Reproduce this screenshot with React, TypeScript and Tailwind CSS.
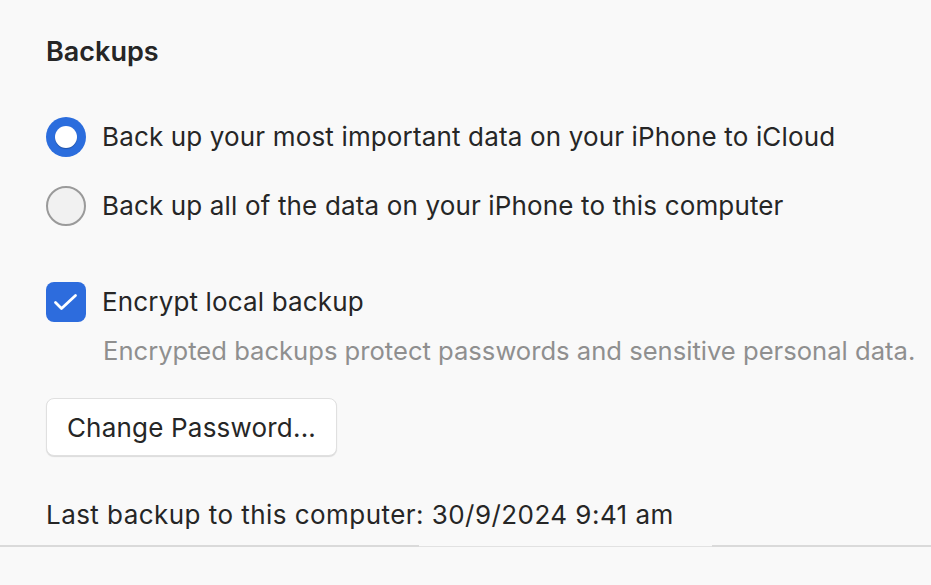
import React from "react";

function RadioOn() {
  return (
    <span className="flex h-[40px] w-[40px] shrink-0 items-center justify-center rounded-full bg-[#2b6ddd]">
      <span className="h-[22px] w-[22px] rounded-full bg-white shadow-[0_1px_1px_rgba(0,0,0,0.25)]" />
    </span>
  );
}

function RadioOff() {
  return (
    <span className="h-[40px] w-[40px] shrink-0 rounded-full border-2 border-[#9a9a9a] bg-[#f1f1f1]" />
  );
}

function CheckOn() {
  return (
    <span className="flex h-[40px] w-[40px] shrink-0 items-center justify-center rounded-[8px] bg-[#2d6cdd]">
      <svg width="40" height="40" viewBox="0 0 40 40" fill="none">
        <path d="M9.5 20.5 L15.5 26.5 L29.5 13.5" stroke="white" strokeWidth="2.8" strokeLinecap="round" strokeLinejoin="round" />
      </svg>
    </span>
  );
}

export default function App() {
  return (
    <div
      className="flex h-[585px] w-[931px] flex-col bg-[#f9f9f9] text-[#262626]"
      style={{ fontFamily: "Inter, 'Noto Sans', sans-serif" }}
    >
      <div className="flex flex-col pl-[46px] pt-[36px]">
        <h2 className="text-[27px] font-semibold leading-[32px]">Backups</h2>

        <div className="mt-[49px] flex items-center gap-[16px]">
          <RadioOn />
          <span className="text-[26px] leading-[32px] tracking-[0.15px]">Back up your most important data on your iPhone to iCloud</span>
        </div>
        <div className="mt-[29px] flex items-center gap-[16px]">
          <RadioOff />
          <span className="text-[26px] leading-[32px] tracking-[0.15px]">Back up all of the data on your iPhone to this computer</span>
        </div>

        <div className="mt-[56px] flex items-center gap-[16px]">
          <CheckOn />
          <span className="text-[26px] leading-[32px] tracking-[0.15px]">Encrypt local backup</span>
        </div>
        <p className="ml-[57px] mt-[14px] text-[25.6px] leading-[30px] text-[#8f8f8f]">
          Encrypted backups protect passwords and sensitive personal data.
        </p>

        <button className="mt-[32px] flex h-[58px] w-[291px] items-center justify-center rounded-[8px] border border-[#e0e0e0] bg-white text-[26px] tracking-[0.2px] text-[#262626] shadow-[0_1px_1px_rgba(0,0,0,0.12)]">
          Change Password...
        </button>

        <p className="mt-[43px] text-[26px] leading-[32px] tracking-[0.45px]">Last backup to this computer: 30/9/2024 9:41 am</p>
      </div>

      <div className="mt-[14px] flex">
        <div className="h-[2px] w-[419px] bg-[#dadada]" />
        <div className="mt-[1px] h-[1px] w-[293px] bg-[#e2e2e2]" />
        <div className="h-[2px] flex-1 bg-[#dadada]" />
      </div>
    </div>
  );
}
